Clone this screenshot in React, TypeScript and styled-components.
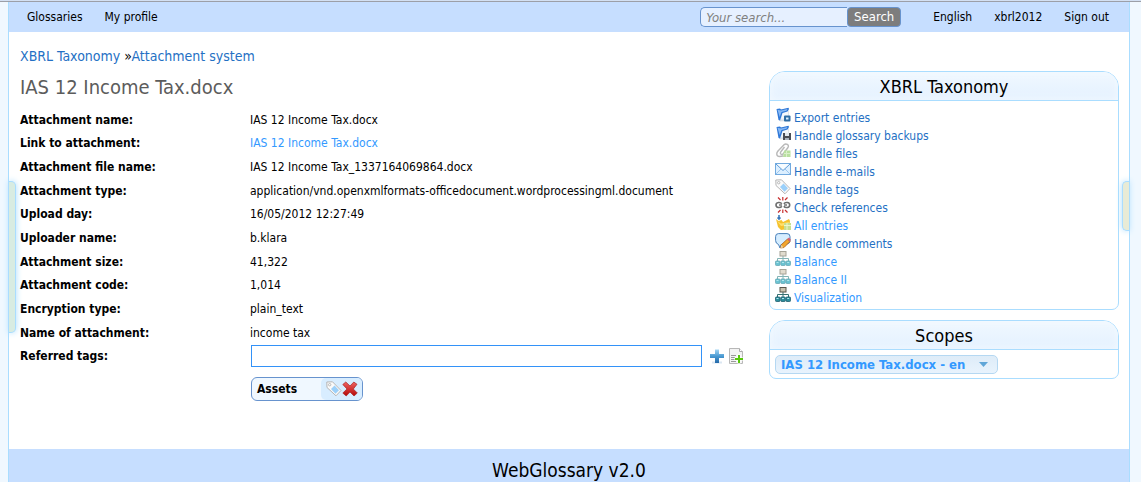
import React from "react";
import styled, { createGlobalStyle } from "styled-components";

const GlobalStyle = createGlobalStyle`
  *, *::before, *::after { box-sizing: border-box; }
  body { margin: 0; background: #fff; }
  body, input, button, select {
    font-family: "DejaVu Sans Condensed", "DejaVu Sans", "Noto Sans", sans-serif;
    font-size: 12px;
    color: #000;
  }
  a { text-decoration: none; }
`;

const Frame = styled.div`
  margin-right: 2px;
  padding: 0 11px 0 8px;
  min-height: 100vh;
  display: flex;
  flex-direction: column;
  background: #f0f8ff;
`;

const TopEdge = styled.div`
  height: 2px;
  margin: 0 -11px 0 -8px;
  background: #d3e0f3;
  border-bottom: 1px solid #9c9fa8;
`;

const Page = styled.div`
  position: relative;
  flex: 1;
  display: flex;
  flex-direction: column;
  background: #fff;
  border: solid #aaddff;
  border-width: 0 1px;
`;

const TopBar = styled.header`
  display: flex;
  align-items: center;
  height: 30px;
  padding: 0 20px 0 18px;
  background: #c6deff;
`;

const Nav = styled.nav`
  display: flex;
  gap: 22px;
`;

const NavLink = styled.a`
  color: #000;
  line-height: 16px;
`;

const SearchForm = styled.form`
  display: flex;
  height: 20px;
  margin: 0 32px 0 auto;
`;

const SearchInput = styled.input`
  width: 147px;
  padding: 0 5px;
  border: 1px solid #6793ce;
  border-right: 0;
  border-radius: 5px 0 0 5px;
  background: #e6f0ff;
  font-size: 13px;
  font-style: italic;
  outline: none;
  &::placeholder { color: #808080; opacity: 1; }
`;

const SearchButton = styled.button`
  width: 54px;
  padding: 0;
  border: 1px solid #6793ce;
  border-radius: 4px;
  background: #7d7d7d;
  color: #fff;
  font-size: 13px;
  line-height: 16px;
`;

const Columns = styled.div`
  flex: 1;
  display: grid;
  grid-template-columns: minmax(0, 1fr) 350px;
  gap: 25px;
  padding: 0 10px 48px 11px;
`;

const Main = styled.main`
  padding-top: 14px;
`;

const Breadcrumb = styled.nav`
  font-size: 14px;
  line-height: 20px;
  a { color: #2470c4; }
`;

const Title = styled.h1`
  margin: 8px 0;
  font-size: 20px;
  font-weight: 400;
  line-height: 26px;
  color: #5c5c5c;
`;

const Details = styled.dl`
  display: grid;
  grid-template-columns: 230px minmax(0, 1fr);
  grid-auto-rows: 1fr;
  height: 260px;
  margin: 0;
  align-items: center;
`;

const Term = styled.dt`
  font-weight: 700;
  line-height: 16px;
`;

const Value = styled.dd`
  display: flex;
  align-items: center;
  margin: 0;
  line-height: 16px;
  a { color: #3399ff; }
`;

const TagInput = styled.input`
  flex: 1;
  min-width: 0;
  height: 22px;
  margin: 0 7px 0 1px;
  padding: 0 4px;
  border: 1px solid #3392f8;
  background: #fff;
  outline: none;
`;

const IconButton = styled.button`
  display: flex;
  width: 16px;
  height: 16px;
  padding: 0;
  border: 0;
  background: none;
  & + & { margin-left: 3px; }
`;

const Tag = styled.div`
  display: flex;
  align-items: stretch;
  justify-content: space-between;
  width: 112px;
  height: 24px;
  margin: 9px 0 0 231px;
  padding-left: 5px;
  border: 1px solid #6793ce;
  border-radius: 6px;
  background: #f0f8ff;
  font-weight: 700;
  line-height: 22px;
  overflow: hidden;
`;

const TagActions = styled.div`
  display: flex;
  align-items: center;
  padding: 0 4px 0 5px;
  border-radius: 5px 0 0 5px;
  background: #d8edff;
  ${IconButton} + ${IconButton} { margin-left: 0; }
`;

const Sidebar = styled.aside`
  display: flex;
  flex-direction: column;
  gap: 10px;
  padding-top: 39px;
`;

const Panel = styled.section`
  border: 1px solid #aaddff;
  border-radius: 16px 16px 7px 7px;
  overflow: hidden;
`;

const PanelTitle = styled.h2`
  height: 29px;
  margin: 0;
  border-bottom: 1px solid #aaddff;
  background: linear-gradient(#f0f8ff, #e4f1ff);
  box-shadow: inset 0 0 10px #f4faff;
  font-size: 18px;
  font-weight: 400;
  line-height: 29px;
  text-align: center;
`;

const Menu = styled.ul`
  margin: 0;
  padding: 7px 5px 3px;
  list-style: none;
`;

const MenuItem = styled.li`
  height: 18px;
`;

const MenuLink = styled.a<{ $bright?: boolean }>`
  display: flex;
  gap: 3px;
  color: ${(p) => (p.$bright ? "#3399ff" : "#2470c4")};
  line-height: 20px;
  svg { flex: none; margin-top: -1px; }
`;

const ScopeBody = styled.div`
  padding: 5px 5px 4px;
`;

const ScopePicker = styled.label`
  display: inline-grid;
  grid-template-columns: 223px;
  align-items: center;
  vertical-align: top;
  select, svg { grid-area: 1 / 1; }
  svg { justify-self: end; margin-right: 10px; pointer-events: none; }
`;

const ScopeSelect = styled.select`
  appearance: none;
  width: 100%;
  height: 19px;
  padding: 0 22px 0 5px;
  border: 1px solid #b5d8f2;
  border-radius: 5px;
  background: linear-gradient(#deecf8, #e8f3fd);
  color: #3399ff;
  font-weight: 700;
  font-size: 13px;
  line-height: 17px;
`;

const Footer = styled.footer`
  height: 34px;
  padding-top: 9px;
  background: #c6deff;
  font-size: 19px;
  line-height: 25px;
  text-align: center;
`;

const SideTab = styled.button<{ $side: "left" | "right" }>`
  position: absolute;
  top: 179px;
  ${(p) => p.$side}: 0;
  width: 7px;
  height: ${(p) => (p.$side === "left" ? 152 : 50)}px;
  padding: 0;
  border: 1px solid #aaddff;
  border-${(p) => p.$side}: 0;
  border-radius: ${(p) => (p.$side === "left" ? "0 5px 5px 0" : "5px 0 0 5px")};
  background: ${(p) => (p.$side === "left" ? "#d8ece2" : "#e8ebd6")};
  box-shadow: 0 0 6px #aaddff;
`;

const Icon = ({ children }: { children: React.ReactNode }) => (
  <svg width="16" height="16" viewBox="0 0 16 16" aria-hidden="true">{children}</svg>
);

const Folder = () => (
  <>
    <path d="M3 3 5 14 14 13.500 13 2Z" fill="#dfe7f1" stroke="#c5cdd7" strokeWidth=".6" />
    <path d="M7 6 13 4l.5 6-7 2Z" fill="#f5f8fc" />
    <path d="M1.500 2 5 1.500 6 2.500 13.500.8 14 2 12.500 4.500 7.500 6 5 13.500 3.500 13Z" fill="#2f78d8" />
    <path d="M2.500 2.700 6 3.500 12.500 2 11.500 3.700 6.500 5 4.700 10Z" fill="#86b8f4" />
  </>
);

const ExportIcon = () => (
  <Icon>
    <Folder />
    <rect x="9" y="8.500" width="6.500" height="6" rx="1" fill="#2e6ca5" />
    <rect x="11" y="10.500" width="2.500" height="2" fill="#d9efff" />
  </Icon>
);

const BackupIcon = () => (
  <Icon>
    <Folder />
    <path d="M8 8h8v7H8Z" fill="#4a4d55" />
    <path d="M10 8h4v3h-4Z" fill="#e4e9ef" />
    <path d="M10 13h4v2h-4Z" fill="#aab2bd" />
  </Icon>
);

const FilesIcon = () => (
  <Icon>
    <path d="M2.500 8.500 9 1.800c2-2 5.500 0 4 2.700L8.500 10.500c-1.500 2-4 .5-2.800-1.500L9.500 4M4 7c-3.500 3-2.500 6.500.5 6.500L8 13" fill="none" stroke="#b9b9b9" strokeWidth="1.400" />
    <path d="M9 7.500h6.500V14H8Z" fill="#b9dfa0" />
    <path d="M9 10.500h6M11.500 8v6" stroke="#d9efc9" />
  </Icon>
);

const MailIcon = () => (
  <Icon>
    <rect x=".5" y="2.500" width="15" height="11" fill="#dcefff" stroke="#72aadf" />
    <path d="m1 13 5-5M15 13l-5-5" stroke="#9cc6ee" />
    <path d="m1 3 7 6.500L15 3" fill="#f7fcff" stroke="#5e9bd7" />
  </Icon>
);

const TagIcon = () => (
  <Icon>
    <path d="M.8 1 6.500.8 15 9.500 10 14.800 1 6.500Z" fill="#fafafa" stroke="#b5b5b5" />
    <path d="M8.500 4.500 13 9.300 9.500 12.800 5 8Z" fill="#9bd0fa" />
    <circle cx="3.700" cy="3.700" r="1.200" fill="#fff" stroke="#aaa" strokeWidth=".8" />
  </Icon>
);

const BrokenLinkIcon = () => (
  <Icon>
    <path d="M6.800 6.700C5.500 4.800 1 5 1 8s4.500 3.200 5.800 1.300M8.800 6.700C10.200 4.800 14.700 5 14.700 8s-4.500 3.200-5.900 1.300" fill="none" stroke="#6e6e6e" strokeWidth="1.600" />
    <path d="M4 8h3M9 8h3" stroke="#777" strokeWidth="1.500" />
    <path d="M7.800 0v3.500M3 .5 5.500 3M12.500.5 10 3M7.800 12.500V16M3 15.500 5.500 13M12.500 15.500 10 13" stroke="#c72c2c" strokeWidth="1.200" />
  </Icon>
);

const EntriesIcon = () => (
  <Icon>
    <path d="M1 4 3.500 6l3-1L8 7l6-3 1 2-1 8-8 1-3-3Z" fill="#f5c22e" />
    <path d="m2 6 4 2.500 8-1.500-1 3-7 1Z" fill="#ffe06b" />
    <path d="M4 0v3M2.500 2.500 4 4l1.500-1.500" stroke="#3c78b9" strokeWidth="1.600" fill="none" />
    <path d="M9 8h7v7H9Z" fill="#c8df90" />
    <path d="M9 10.500h7M12 8v7" stroke="#edf5cc" />
  </Icon>
);

const CommentIcon = () => (
  <Icon>
    <path d="M3.500.6h8.500q3 0 3 3v3.900q0 3-3 3.500L6 11.500 5 15l-1.500-3.500Q.6 10.500.6 7.500V3.600q0-3 2.900-3Z" fill="#d5edff" stroke="#487fb9" />
    <path d="m6.500 11.500 6-5.500 2.500 2.500-6 6-3.500.5Z" fill="#f2a52e" stroke="#a85d1d" strokeWidth=".8" />
    <path d="m12.300 6 1.700-1.500 2 2.500-1.500 1.500Z" fill="#d75c70" />
    <path d="m6.300 11.800-.8 3.200 3-.6Z" fill="#ead1a0" />
  </Icon>
);

const TreeIcon = ({ strong }: { strong?: boolean }) => (
  <Icon>
    <g fill="none">
      <path d="M8 5v5M2.500 10V7.500h11V10" stroke={strong ? "#356f70" : "#83b3b5"} />
      <rect x="5" y=".5" width="6" height="4.500" fill={strong ? "#c9c2ae" : "#e1dccf"} stroke={strong ? "#59564b" : "#a6a397"} />
    </g>
    <g fill={strong ? "#2d8e9c" : "#6bc3d2"} stroke={strong ? "#22606f" : "#68a9b5"} strokeWidth=".8">
      <rect x=".5" y="10" width="4.500" height="4.500" rx=".8" />
      <rect x="5.800" y="10" width="4.500" height="4.500" rx=".8" />
      <rect x="11" y="10" width="4.500" height="4.500" rx=".8" />
    </g>
    <path d="M1.500 11.500h2M7 11.500h2M12.200 11.500h2" stroke="#b3e7ee" />
  </Icon>
);

const PlusIcon = () => (
  <Icon>
    <defs>
      <linearGradient id="plus" x2="0" y2="1">
        <stop stopColor="#a5d6f3" />
        <stop offset=".5" stopColor="#4a9ad2" />
        <stop offset="1" stopColor="#2468a8" />
      </linearGradient>
    </defs>
    <path d="M3 14.500h10" stroke="#dbe7f2" strokeWidth="2" />
    <path d="M6 1.500h4V6h5v4h-5v5H6v-5H1V6h5Z" fill="url(#plus)" />
  </Icon>
);

const AddPageIcon = () => (
  <Icon>
    <path d="M1.500.5h10l3 3v12h-13Z" fill="#f3f3f3" stroke="#b7b7b7" />
    <path d="M11.500.5v3h3" fill="#fff" stroke="#aaa" />
    <path d="M3 7.500h5M3 9.500h4M3 11.500h4M3 13.500h5" stroke="#999" />
    <path d="M9.500 6.500h3v3h3v3h-3v3h-3v-3h-3v-3h3Z" fill="#fff" />
    <path d="M11 7v8M7 11h8" stroke="#58c70c" strokeWidth="2" />
  </Icon>
);

const DeleteIcon = () => (
  <Icon>
    <defs>
      <linearGradient id="cross" x2="0" y2="1">
        <stop stopColor="#ef6262" />
        <stop offset="1" stopColor="#b40808" />
      </linearGradient>
    </defs>
    <path d="m.8 3.500 3-2.500 4.200 4 3.800-4 3.200 2.300L11.300 8l4 4-3.300 3-4-4-3.800 4-3.400-3L5 8Z" fill="url(#cross)" stroke="#a92424" strokeWidth=".7" />
  </Icon>
);

const details: [string, React.ReactNode][] = [
  ["Attachment name:", "IAS 12 Income Tax.docx"],
  ["Link to attachment:", <a href="#attachment">IAS 12 Income Tax.docx</a>],
  ["Attachment file name:", "IAS 12 Income Tax_1337164069864.docx"],
  ["Attachment type:", "application/vnd.openxmlformats-officedocument.wordprocessingml.document"],
  ["Upload day:", "16/05/2012 12:27:49"],
  ["Uploader name:", "b.klara"],
  ["Attachment size:", "41,322"],
  ["Attachment code:", "1,014"],
  ["Encryption type:", "plain_text"],
  ["Name of attachment:", "income tax"],
];

const menu: { text: string; icon: React.ReactNode; bright?: boolean }[] = [
  { text: "Export entries", icon: <ExportIcon /> },
  { text: "Handle glossary backups", icon: <BackupIcon /> },
  { text: "Handle files", icon: <FilesIcon /> },
  { text: "Handle e-mails", icon: <MailIcon /> },
  { text: "Handle tags", icon: <TagIcon /> },
  { text: "Check references", icon: <BrokenLinkIcon /> },
  { text: "All entries", icon: <EntriesIcon />, bright: true },
  { text: "Handle comments", icon: <CommentIcon /> },
  { text: "Balance", icon: <TreeIcon />, bright: true },
  { text: "Balance II", icon: <TreeIcon />, bright: true },
  { text: "Visualization", icon: <TreeIcon strong />, bright: true },
];

export default function App() {
  return (
    <Frame>
      <GlobalStyle />
      <TopEdge />
      <Page>
        <TopBar>
          <Nav>
            <NavLink href="#glossaries">Glossaries</NavLink>
            <NavLink href="#profile">My profile</NavLink>
          </Nav>
          <SearchForm role="search" onSubmit={(e) => e.preventDefault()}>
            <SearchInput aria-label="Search" placeholder="Your search..." />
            <SearchButton type="submit">Search</SearchButton>
          </SearchForm>
          <Nav>
            <NavLink href="#language">English</NavLink>
            <NavLink href="#account">xbrl2012</NavLink>
            <NavLink href="#signout">Sign out</NavLink>
          </Nav>
        </TopBar>
        <Columns>
          <Main>
            <Breadcrumb>
              <a href="#taxonomy">XBRL Taxonomy</a> »<a href="#attachments">Attachment system</a>
            </Breadcrumb>
            <Title>IAS 12 Income Tax.docx</Title>
            <Details>
              {details.map(([term, value]) => (
                <React.Fragment key={term}>
                  <Term>{term}</Term>
                  <Value>{value}</Value>
                </React.Fragment>
              ))}
              <Term><label htmlFor="tags">Referred tags:</label></Term>
              <Value>
                <TagInput id="tags" />
                <IconButton aria-label="Add tag"><PlusIcon /></IconButton>
                <IconButton aria-label="New tag entry"><AddPageIcon /></IconButton>
              </Value>
            </Details>
            <Tag>
              Assets
              <TagActions>
                <IconButton aria-label="Show tag"><TagIcon /></IconButton>
                <IconButton aria-label="Remove tag"><DeleteIcon /></IconButton>
              </TagActions>
            </Tag>
          </Main>
          <Sidebar>
            <Panel>
              <PanelTitle>XBRL Taxonomy</PanelTitle>
              <Menu>
                {menu.map((m) => (
                  <MenuItem key={m.text}>
                    <MenuLink href="#menu" $bright={m.bright}>{m.icon}{m.text}</MenuLink>
                  </MenuItem>
                ))}
              </Menu>
            </Panel>
            <Panel>
              <PanelTitle>Scopes</PanelTitle>
              <ScopeBody>
                <ScopePicker>
                  <ScopeSelect aria-label="Scope">
                    <option>IAS 12 Income Tax.docx - en</option>
                  </ScopeSelect>
                  <svg width="9" height="5" viewBox="0 0 9 5" aria-hidden="true">
                    <path d="M0 0h9L4.500 5Z" fill="#5fa6d8" />
                  </svg>
                </ScopePicker>
              </ScopeBody>
            </Panel>
          </Sidebar>
        </Columns>
        <Footer>WebGlossary v2.0</Footer>
        <SideTab $side="left" aria-label="Open left panel" />
        <SideTab $side="right" aria-label="Open right panel" />
      </Page>
    </Frame>
  );
}
